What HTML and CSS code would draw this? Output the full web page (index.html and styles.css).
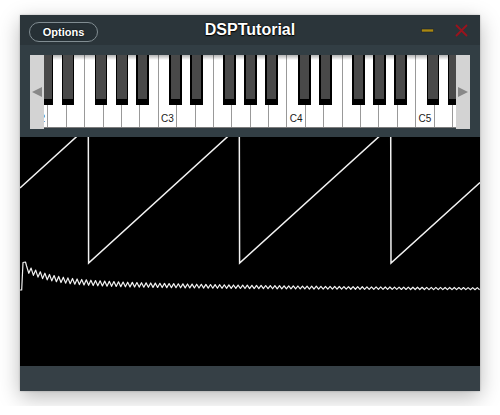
FILE: index.html
```html
<!DOCTYPE html>
<html>
<head>
<meta charset="utf-8">
<title>DSPTutorial</title>
<link rel="stylesheet" href="styles.css">
</head>
<body>
<div class="window">
  <div class="titlebar">
    <div class="tb-left"><button class="options">Options</button></div>
    <div class="title">DSPTutorial</div>
    <div class="tb-right">
      <svg class="tb-btn" viewBox="0 0 13 13" width="13" height="13"><rect x="0.5" y="5" width="12" height="3" fill="#aa8811" stroke="#1c2428" stroke-width="0.6"/></svg>
      <svg class="tb-btn" viewBox="0 0 13 13" width="13" height="13"><path d="M1 1 L12 12 M12 1 L1 12" stroke="#9a131d" stroke-width="1.8" fill="none"/></svg>
    </div>
  </div>
  <div class="controls">
    <div class="keyboard">
      <div class="keys">
        <div class="wk"><div class="bk cs"></div><span class="lbl">C2</span></div>
        <div class="wk"><div class="bk ds"></div></div>
        <div class="wk"></div>
        <div class="wk"><div class="bk fs"></div></div>
        <div class="wk"><div class="bk gs"></div></div>
        <div class="wk"><div class="bk as"></div></div>
        <div class="wk"></div>
        <div class="wk"><div class="bk cs"></div><span class="lbl">C3</span></div>
        <div class="wk"><div class="bk ds"></div></div>
        <div class="wk"></div>
        <div class="wk"><div class="bk fs"></div></div>
        <div class="wk"><div class="bk gs"></div></div>
        <div class="wk"><div class="bk as"></div></div>
        <div class="wk"></div>
        <div class="wk"><div class="bk cs"></div><span class="lbl">C4</span></div>
        <div class="wk"><div class="bk ds"></div></div>
        <div class="wk"></div>
        <div class="wk"><div class="bk fs"></div></div>
        <div class="wk"><div class="bk gs"></div></div>
        <div class="wk"><div class="bk as"></div></div>
        <div class="wk"></div>
        <div class="wk"><div class="bk cs"></div><span class="lbl">C5</span></div>
        <div class="wk"><div class="bk ds"></div></div>
        <div class="wk"></div>
        <div class="wk"><div class="bk fs"></div></div>
      </div>
      <div class="scroll left"><svg viewBox="0 0 10 10" width="10" height="10"><path d="M0 5 L10 0 L10 10 Z" fill="#888"/></svg></div>
      <div class="scroll right"><svg viewBox="0 0 10 10" width="10" height="10"><path d="M10 5 L0 0 L0 10 Z" fill="#888"/></svg></div>
    </div>
  </div>
  <div class="scope">
    <svg viewBox="0 0 460 229" width="460" height="229">
      <polyline class="trace" points="0,50.9 68.3,-11 68.6,126 219.3,-11 219.6,126 370.7,-11 371,126 460,45.5"/>
      <path id="spec" class="trace thin" d=""/>
    </svg>
  </div>
  <div class="footer"></div>
</div>
<script src="script.js"></script>
</body>
</html>
```
FILE: styles.css
```css
* { box-sizing: border-box; }
html, body { margin: 0; padding: 0; background: #fff; }
body { padding: 15px 20px; font-family: "Liberation Sans", Arial, sans-serif; }

.window {
  width: 460px;
  height: 376px;
  display: flex;
  flex-direction: column;
  background: #323e44;
  box-shadow: 0 6px 20px rgba(0,0,0,0.28), 0 0 2px rgba(0,0,0,0.25);
}

.titlebar {
  height: 30px;
  flex: none;
  background: #2b353a;
  display: grid;
  grid-template-columns: 1fr auto 1fr;
  align-items: center;
}
.tb-left { padding-left: 9px; display: flex; }
.options {
  margin-top: 4px;
  width: 69px;
  height: 20px;
  padding: 0;
  border: 1.5px solid #818d92;
  border-radius: 10px;
  background: #263035;
  color: #fff;
  font: bold 11px "Liberation Sans", Arial, sans-serif;
  text-shadow: 0 0 2px #000;
}
.title {
  color: #fff;
  font: bold 16px "Liberation Sans", Arial, sans-serif;
  text-shadow: 0 0 2px #000, 0 1px 1px #000;
}
.tb-right {
  display: flex;
  justify-content: flex-end;
  align-items: center;
  gap: 21.5px;
  padding-right: 12px;
}
.tb-btn { display: block; }

.controls { height: 92px; flex: none; padding: 10px 10px 0; }
.keyboard { position: relative; height: 74px; overflow: hidden; }
.keys {
  display: flex;
  height: 73px;
  border-bottom: 1px solid #7d7d7d;
  background: #fff;
}
.wk {
  position: relative;
  flex: none;
  width: 18.4px;
  height: 72px;
  background: linear-gradient(rgba(0,0,0,0.3), rgba(0,0,0,0) 5px), #fff;
  border-right: 1px solid rgba(0,0,0,0.4);
}
.bk {
  position: absolute;
  top: 0;
  width: 12.6px;
  height: 50px;
  background: #000;
  z-index: 2;
}
.bk::before {
  content: "";
  position: absolute;
  left: 1.6px;
  right: 1.6px;
  top: 0;
  height: 44px;
  background: #494949;
}
.cs { left: 10.67px; }
.ds { left: 13.25px; }
.fs { left: 9.38px; }
.gs { left: 11.96px; }
.as { left: 14.54px; }
.lbl {
  position: absolute;
  left: 0;
  right: 0;
  bottom: 3px;
  text-align: center;
  font: 10px "Liberation Sans", Arial, sans-serif;
  color: #1a1a1a;
}
.scroll {
  position: absolute;
  top: 0;
  height: 74px;
  background: #d3d3d3;
  display: flex;
  align-items: center;
  justify-content: center;
  z-index: 3;
}
.scroll svg { display: block; }
.scroll.left { left: 0; width: 13.5px; }
.scroll.right { right: 0; width: 14.5px; }

.scope { height: 229px; flex: none; background: #000; }
.scope svg { display: block; }
.trace { fill: none; stroke: #f2f2f2; stroke-width: 1.5; stroke-linejoin: miter; }
.trace.thin { stroke-width: 1.2; stroke-linejoin: round; }

.footer { flex: 1; background: #364046; }
```
FILE: script.js
```js
(function () {
  var p = document.getElementById('spec');
  var d = 'M0,153 L1.7,153 L3,125.5 L5.5,125';
  var k = 0;
  for (var x = 6.5; x <= 460; x += 2.3, k++) {
    var X = x + 20;
    var c = 289.5 - 14 * Math.exp(-(X - 24) / 25) - 8 * Math.exp(-(X - 24) / 200);
    var a = 0.6 + 2.6 * Math.exp(-(X - 24) / 250);
    var y = c + (k % 2 ? a : -a) - 137;
    d += ' L' + x.toFixed(1) + ',' + y.toFixed(2);
  }
  p.setAttribute('d', d);
})();
```
